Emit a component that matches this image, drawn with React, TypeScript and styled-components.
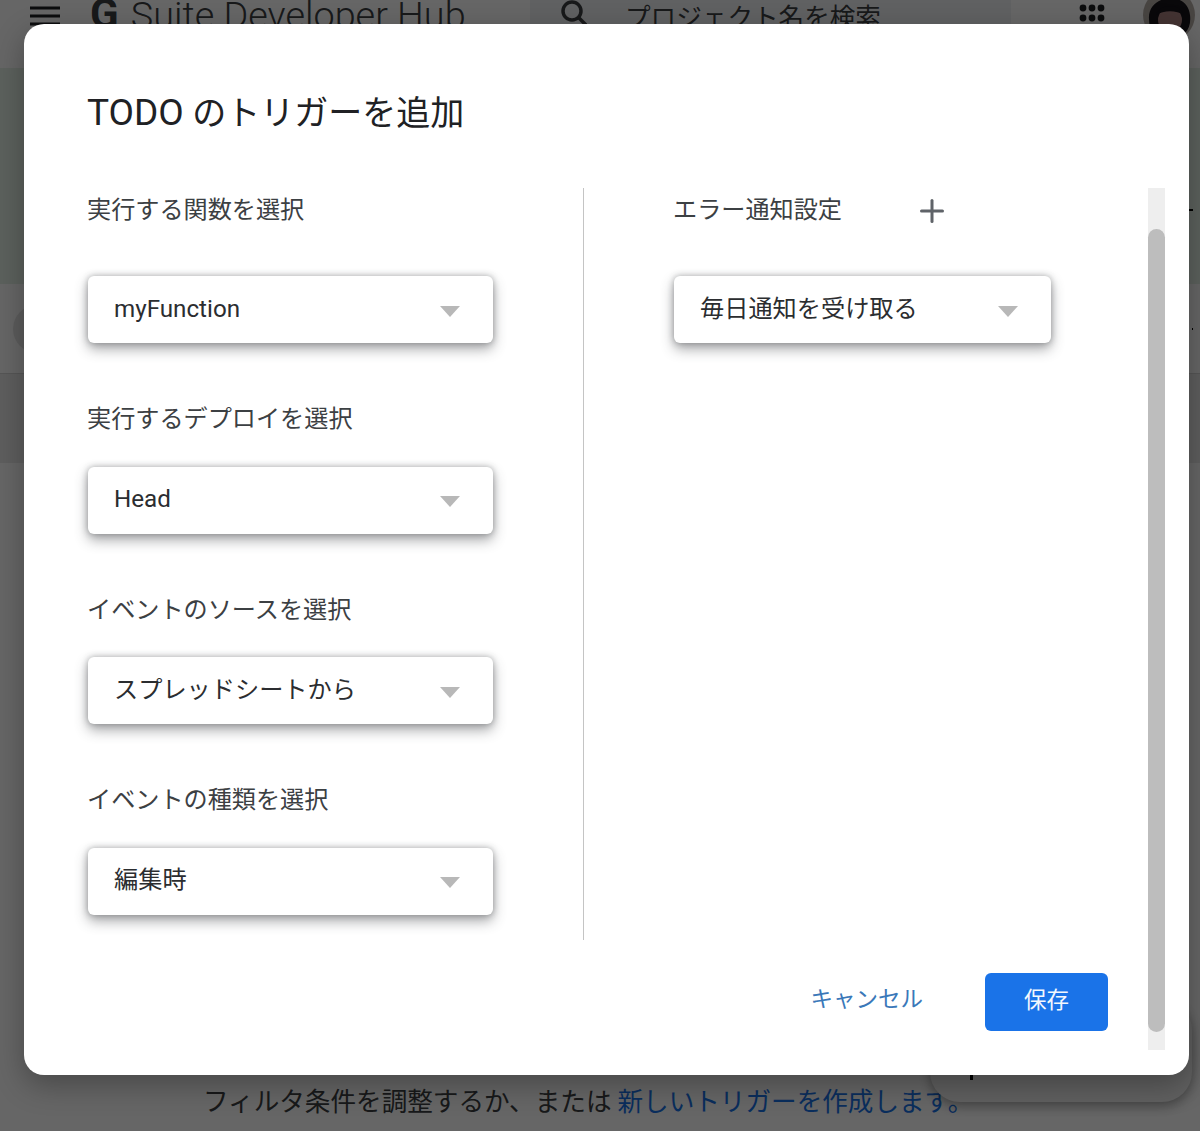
import { Plus } from 'lucide-react';
import styled, { createGlobalStyle } from 'styled-components';

const GlobalStyle = createGlobalStyle`
	html, body {
		margin: 0;
		padding: 0;
		background: #fff;
		font-family: 'Roboto', 'Noto Sans CJK JP', sans-serif;
	}
	* {
		box-sizing: border-box;
	}
`;

// ── Page behind the dialog ────────────────────────────────────────────────────

const Page = styled.div`
	position: relative;
	width: 1200px;
	height: 1131px;
	overflow: hidden;
	display: flex;
	flex-direction: column;
	background: #fff;
`;

const Header = styled.header`
	height: 68px;
	flex: none;
	display: flex;
	align-items: flex-start;
	padding-left: 30px;
`;

const MenuIcon = styled.svg`
	width: 30px;
	height: 30px;
	margin-top: 1px;
	color: #202124;
`;

const Product = styled.div`
	margin-left: 30px;
	width: 440px;
	font-size: 37.8px;
	line-height: 27px;
	font-weight: 300;
	color: #3c4043;
	white-space: nowrap;

	b {
		font-size: 42px;
		font-weight: 700;
		margin-right: 3px;
	}
`;

const SearchBox = styled.div`
	width: 481px;
	height: 60px;
	background: #f1f3f4;
	display: flex;
	align-items: flex-start;
	padding-left: 30px;
	gap: 38px;
	color: #3c4043;
	font-size: 25.6px;
	line-height: 36px;
	white-space: nowrap;
`;

const Apps = styled.svg`
	width: 26px;
	height: 32px;
	margin-left: 68px;
	color: #202124;
`;

const Avatar = styled.svg`
	width: 52px;
	height: 52px;
	margin-left: 38px;
	margin-top: -11px;
	flex: none;
`;

const Band = styled.div<{ $height: number; $bg: string; $line?: boolean }>`
	height: ${({ $height }) => $height}px;
	flex: none;
	background: ${({ $bg }) => $bg};
	border-bottom: ${({ $line }) => ($line ? '1px solid #d8d8d8' : 'none')};
	display: flex;
	align-items: center;
	justify-content: space-between;
`;

const Chip = styled.div`
	width: 48px;
	height: 48px;
	border-radius: 50%;
	background: #e6e6e6;
	margin-left: 13px;
`;

const Tick = styled.span<{ $width: number; $offset: number }>`
	width: ${({ $width }) => $width}px;
	height: 2px;
	margin-left: auto;
	margin-right: 7px;
	margin-top: ${({ $offset }) => $offset}px;
	background: #000;
`;

const EmptyRow = styled.div`
	flex: 1;
	position: relative;
`;

const EmptyText = styled.p`
	margin: 0;
	padding: 623px 0 0 203px;
	position: absolute;
	top: 0;
	left: 0;
	font-size: 25.6px;
	line-height: 32px;
	color: #3c4043;
	white-space: nowrap;

	a {
		color: #1a73e8;
		margin-left: 6px;
	}
`;

const Fab = styled.div`
	position: absolute;
	left: 930px;
	top: 1000px;
	width: 262px;
	height: 102px;
	border-radius: 30px;
	background: #f0f0f0;
	box-shadow: 0 4px 12px rgba(0, 0, 0, 0.35);

	&::after {
		content: '';
		position: absolute;
		left: 40px;
		top: 70px;
		width: 3px;
		height: 10px;
		background: #000;
	}
`;

const Scrim = styled.div`
	position: absolute;
	inset: 0;
	background: rgba(0, 0, 0, 0.6);
`;

// ── Dialog ────────────────────────────────────────────────────────────────────

const Dialog = styled.div`
	position: absolute;
	left: 24px;
	top: 24px;
	width: 1165px;
	height: 1051px;
	border-radius: 20px;
	background: #fff;
	box-shadow: 0 10px 30px rgba(0, 0, 0, 0.3);
	display: flex;
	flex-direction: column;
`;

const Title = styled.h2`
	margin: 0;
	height: 164px;
	flex: none;
	padding: 67px 0 0 63px;
	font-size: 34px;
	line-height: 44px;
	font-weight: 400;
	color: #202124;

	span {
		font-size: 37px;
	}
`;

const Body = styled.div`
	height: 862px;
	flex: none;
	display: flex;
	padding-right: 24px;
`;

const Main = styled.div`
	flex: 1;
	padding-left: 63px;
	display: flex;
	flex-direction: column;
`;

const Columns = styled.div`
	height: 752px;
	flex: none;
	display: flex;
`;

const LeftColumn = styled.div`
	width: 497px;
	flex: none;
	border-right: 1.5px solid #c4c4c4;
`;

const RightColumn = styled.div`
	flex: 1;
	padding-left: 89px;
`;

const Field = styled.div`
	margin-bottom: 54.5px;
`;

const LabelRow = styled.div<{ $first?: boolean }>`
	height: 42px;
	margin-bottom: ${({ $first }) => ($first ? 46 : 27)}px;
	display: flex;
	align-items: center;
`;

const Label = styled.span`
	padding-top: 1px;
	font-size: 24.15px;
	line-height: 42px;
	color: #3c4043;
	white-space: nowrap;
`;

const AddButton = styled.span`
	display: flex;
	margin-left: 72px;
	margin-top: 4px;
	color: #5f6368;
`;

const Select = styled.div<{ $width: number }>`
	width: ${({ $width }) => $width}px;
	height: 67px;
	margin-left: 1px;
	padding: 0 33px 2px 26px;
	border-radius: 6px;
	background: #fff;
	box-shadow: 0 6px 13px rgba(60, 64, 67, 0.46), 0 0 6px rgba(60, 64, 67, 0.38);
	display: flex;
	align-items: center;
	justify-content: space-between;
	font-size: 24.2px;
	line-height: 30px;
	color: #2b2d30;
	white-space: nowrap;
`;

const Arrow = styled.span`
	width: 0;
	height: 0;
	margin-top: 5px;
	border-left: 10px solid transparent;
	border-right: 10px solid transparent;
	border-top: 11px solid #b8b8b8;
`;

const Actions = styled.div`
	margin-top: 33px;
	padding-right: 40px;
	display: flex;
	justify-content: flex-end;
	align-items: center;
	gap: 62px;
`;

const CancelButton = styled.button`
	border: 0;
	padding: 0 0 6px;
	background: none;
	font: inherit;
	font-size: 22.5px;
	line-height: 30px;
	color: #3a78b9;
`;

const SaveButton = styled.button`
	width: 123px;
	height: 58px;
	border: 0;
	border-radius: 6px;
	padding: 0 0 5px;
	background: #1a73e8;
	font: inherit;
	font-size: 22.5px;
	line-height: 30px;
	color: #f2f7fe;
`;

const ScrollTrack = styled.div`
	width: 17px;
	flex: none;
	padding-top: 41px;
	padding-bottom: 18px;
	background: #eeeeee;
	display: flex;
`;

const ScrollThumb = styled.div`
	flex: 1;
	border-radius: 9px;
	background: #bdbdbd;
`;

// ─────────────────────────────────────────────────────────────────────────────

const fields = [
	{ label: '実行する関数を選択', value: 'myFunction' },
	{ label: '実行するデプロイを選択', value: 'Head' },
	{ label: 'イベントのソースを選択', value: 'スプレッドシートから' },
	{ label: 'イベントの種類を選択', value: '編集時' },
];

export default function App() {
	return (
		<Page>
			<GlobalStyle />

			<Header>
				<MenuIcon viewBox="0 0 30 30">
					<path d="M0 7h30M0 15h30M0 23h30" stroke="currentColor" strokeWidth="3" />
				</MenuIcon>
				<Product>
					<b>G</b> Suite Developer Hub
				</Product>
				<SearchBox>
					<svg width="27" height="27" viewBox="0 0 27 27" fill="none" stroke="currentColor" strokeWidth="3.5">
						<circle cx="12" cy="11" r="9" />
						<path d="M18.5 17.5l7.5 7.5" />
					</svg>
					<span>プロジェクト名を検索</span>
				</SearchBox>
				<Apps viewBox="0 0 26 32" fill="currentColor">
					{[8, 18, 28].map((cy) =>
						[4, 13, 22].map((cx) => <circle key={`${cx}-${cy}`} cx={cx} cy={cy} r="3.4" />),
					)}
				</Apps>
				<Avatar viewBox="0 0 52 52">
					<circle cx="26" cy="26" r="26" fill="#b5aca6" />
					<path d="M6 30C4 6 44 0 47 26c1 8-1 14-5 18H10c-3-4-4-9-4-14z" fill="#17141a" />
					<ellipse cx="27" cy="31" rx="12" ry="12" fill="#a87f7e" />
					<path d="M13 26c4-12 24-12 28 0-8-5-20-5-28 0z" fill="#17141a" />
					<path d="M22 38h10" stroke="#8a3038" strokeWidth="2" />
				</Avatar>
			</Header>

			<Band $height={216} $bg="#e6f2e8">
				<Tick $width={4} $offset={67} />
			</Band>
			<Band $height={90} $bg="#fff" $line>
				<Chip />
				<Tick $width={1} $offset={0} />
			</Band>
			<Band $height={89} $bg="#ececec" />
			<EmptyRow>
				<EmptyText>
					フィルタ条件を調整するか、または
					<a>新しいトリガーを作成します。</a>
				</EmptyText>
			</EmptyRow>
			<Fab />
			<Scrim />

			<Dialog>
				<Title>
					<span>TODO</span> のトリガーを追加
				</Title>
				<Body>
					<Main>
						<Columns>
							<LeftColumn>
								{fields.map((field, i) => (
									<Field key={field.label}>
										<LabelRow $first={i === 0}>
											<Label>{field.label}</Label>
										</LabelRow>
										<Select $width={405}>
											{field.value}
											<Arrow />
										</Select>
									</Field>
								))}
							</LeftColumn>
							<RightColumn>
								<LabelRow $first>
									<Label>エラー通知設定</Label>
									<AddButton>
										<Plus size={36} strokeWidth={3} absoluteStrokeWidth />
									</AddButton>
								</LabelRow>
								<Select $width={377}>
									毎日通知を受け取る
									<Arrow />
								</Select>
							</RightColumn>
						</Columns>
						<Actions>
							<CancelButton>キャンセル</CancelButton>
							<SaveButton>保存</SaveButton>
						</Actions>
					</Main>
					<ScrollTrack>
						<ScrollThumb />
					</ScrollTrack>
				</Body>
			</Dialog>
		</Page>
	);
}
